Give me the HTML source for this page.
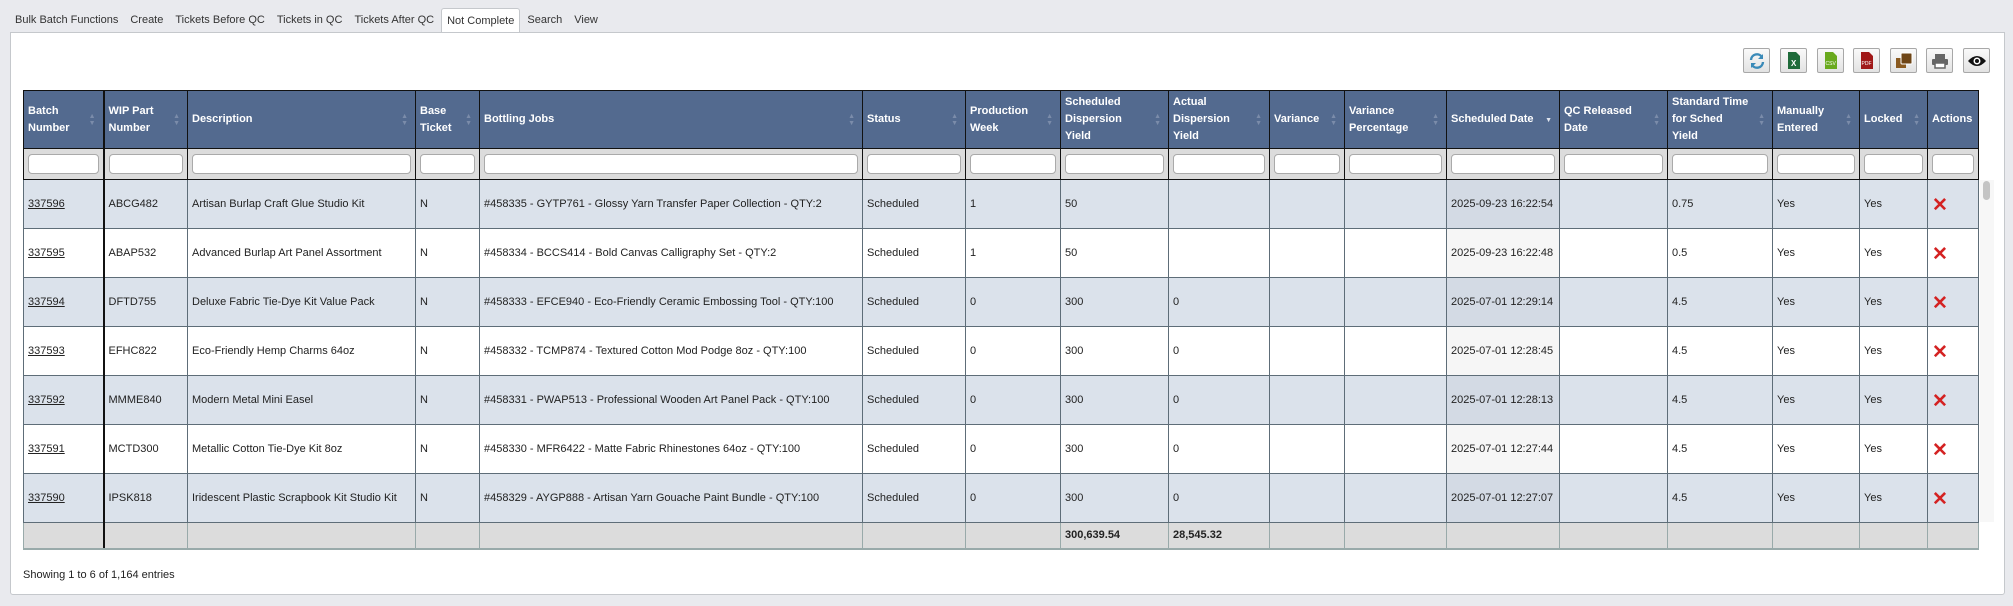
<!DOCTYPE html>
<html><head><meta charset="utf-8"><style>
*{box-sizing:border-box}
body{margin:0;width:2013px;height:606px;background:#e9eaee;font-family:"Liberation Sans",Arial,sans-serif;font-size:11px;color:#222;position:relative;overflow:hidden}
.tabs{position:absolute;left:10px;top:8px;height:25px;display:flex}
.tab{padding:0 5px;height:24px;line-height:24px;color:#333;font-size:11px;margin-right:2px}
.tab.act{background:#fff;border:1px solid #c5c8cc;border-bottom:none;height:25px;border-radius:3px 3px 0 0}
.panel{position:absolute;left:10px;top:32px;width:1995px;height:563px;background:#fff;border:1px solid #c5c8cc;border-radius:0 0 3px 3px}
.btn{position:absolute;top:48px;width:27px;height:25px;border:1px solid #a8a8a8;border-radius:2px;background:linear-gradient(#fafafa,#e2e2e2);display:flex;align-items:center;justify-content:center}
table{position:absolute;left:23px;top:90px;border-collapse:collapse;table-layout:fixed;width:1955px}
th{background:#536a8f;color:#fff;font-weight:bold;text-align:left;padding:0 4px;height:58px;border:1px solid #111;line-height:17px;font-size:11px;position:relative}
th .s{position:absolute;right:7px;top:22px;color:#7b8caa;font-size:7px;line-height:7px}
tr.f td{background:#dcdcdc;height:31px;border:1px solid #111;padding:0 4px}
tr.f input{width:100%;height:20px;border:1px solid #aaa;border-radius:4px;background:#fff}
td{border:1px solid #5e6d78;padding:0 4px;font-size:11px}
tr.d td{height:49px}
tr.d.o td{background:#dbe2eb}
tr.d.o td.sd{background:#d3dae4}
tr.d.e td.sd{background:#f6f6f6}
tr.d.e td{background:#fff}
tr.d td:first-child{border-right:2px solid #111}
th:first-child,tr.f td:first-child{border-right:2px solid #111}
tr.t td{background:#dcdcdc;height:26px;font-weight:bold;border-bottom:2px solid #222;border-color:#9aa}
tr.t td:first-child{border-right:2px solid #111}
a{color:#222;text-decoration:underline}
.x{color:#d42222;font-size:19px;font-weight:bold;line-height:10px;position:relative;top:3px}
</style></head><body>
<div class="tabs">
<div class="tab">Bulk Batch Functions</div><div class="tab">Create</div><div class="tab">Tickets Before QC</div><div class="tab">Tickets in QC</div><div class="tab">Tickets After QC</div><div class="tab act">Not Complete</div><div class="tab">Search</div><div class="tab">View</div>
</div>
<div class="panel"></div>
<div class="btn" style="left:1743px"><svg width="18" height="16" viewBox="0 0 18 16"><path d="M3 7a6 6 0 0 1 11-3M15 9a6 6 0 0 1-11 3" stroke="#3a8ab8" stroke-width="2.4" fill="none"/><path d="M15 1v5h-5z M3 15v-5h5z" fill="#3a8ab8"/></svg></div>
<div class="btn" style="left:1780px"><svg width="12" height="17"><path d="M0 0h8l4 4v13H0z" fill="#1f6b3a"/><text x="3" y="14" font-size="8" fill="#fff" font-family="Liberation Sans" font-weight="bold">X</text></svg></div>
<div class="btn" style="left:1817px"><svg width="12" height="17"><path d="M0 0h8l4 4v13H0z" fill="#6aaa1e"/><text x="0.5" y="13" font-size="5" fill="#fff" font-family="Liberation Sans">CSV</text></svg></div>
<div class="btn" style="left:1853px"><svg width="12" height="17"><path d="M0 0h8l4 4v13H0z" fill="#a01818"/><text x="0.5" y="13" font-size="5" fill="#fff" font-family="Liberation Sans">PDF</text></svg></div>
<div class="btn" style="left:1890px"><svg width="18" height="17"><rect x="1" y="6" width="10" height="10" fill="#8a5a20"/><rect x="6" y="1" width="11" height="11" rx="1" fill="#6e4516" stroke="#fff" stroke-width="1"/></svg></div>
<div class="btn" style="left:1926px"><svg width="18" height="16"><rect x="4" y="1" width="10" height="5" fill="#666"/><rect x="1" y="6" width="16" height="6" rx="1" fill="#666"/><rect x="4" y="10" width="10" height="5" fill="#fff" stroke="#666" stroke-width="1.5"/></svg></div>
<div class="btn" style="left:1963px"><svg width="20" height="14"><path d="M1 7Q10-3 19 7Q10 17 1 7z" fill="#111"/><circle cx="10" cy="7" r="3.5" fill="#fff"/><circle cx="10" cy="7" r="2" fill="#111"/></svg></div>
<table>
<colgroup><col style="width:80px"><col style="width:84px"><col style="width:228px"><col style="width:64px"><col style="width:383px"><col style="width:103px"><col style="width:95px"><col style="width:108px"><col style="width:101px"><col style="width:75px"><col style="width:102px"><col style="width:113px"><col style="width:108px"><col style="width:105px"><col style="width:87px"><col style="width:68px"><col style="width:51px"></colgroup>
<tr><th>Batch<br>Number<span class="s">▲<br>▼</span></th><th>WIP Part<br>Number<span class="s">▲<br>▼</span></th><th>Description<span class="s">▲<br>▼</span></th><th>Base<br>Ticket<span class="s">▲<br>▼</span></th><th>Bottling Jobs<span class="s">▲<br>▼</span></th><th>Status<span class="s">▲<br>▼</span></th><th>Production<br>Week<span class="s">▲<br>▼</span></th><th>Scheduled<br>Dispersion<br>Yield<span class="s">▲<br>▼</span></th><th>Actual<br>Dispersion<br>Yield<span class="s">▲<br>▼</span></th><th>Variance<span class="s">▲<br>▼</span></th><th>Variance<br>Percentage<span class="s">▲<br>▼</span></th><th>Scheduled Date<span class="s" style="color:#dfe4ee;top:26px">▼</span></th><th>QC Released<br>Date<span class="s">▲<br>▼</span></th><th>Standard Time<br>for Sched<br>Yield<span class="s">▲<br>▼</span></th><th>Manually<br>Entered<span class="s">▲<br>▼</span></th><th>Locked<span class="s">▲<br>▼</span></th><th>Actions</th></tr>
<tr class="f"><td><input></td><td><input></td><td><input></td><td><input></td><td><input></td><td><input></td><td><input></td><td><input></td><td><input></td><td><input></td><td><input></td><td><input></td><td><input></td><td><input></td><td><input></td><td><input></td><td><input></td></tr>
<tr class="d o"><td><a>337596</a></td><td>ABCG482</td><td>Artisan Burlap Craft Glue Studio Kit</td><td>N</td><td>#458335 - GYTP761 - Glossy Yarn Transfer Paper Collection - QTY:2</td><td>Scheduled</td><td>1</td><td>50</td><td></td><td></td><td></td><td class="sd">2025-09-23 16:22:54</td><td></td><td>0.75</td><td>Yes</td><td>Yes</td><td><span class="x">✕</span></td></tr>
<tr class="d e"><td><a>337595</a></td><td>ABAP532</td><td>Advanced Burlap Art Panel Assortment</td><td>N</td><td>#458334 - BCCS414 - Bold Canvas Calligraphy Set - QTY:2</td><td>Scheduled</td><td>1</td><td>50</td><td></td><td></td><td></td><td class="sd">2025-09-23 16:22:48</td><td></td><td>0.5</td><td>Yes</td><td>Yes</td><td><span class="x">✕</span></td></tr>
<tr class="d o"><td><a>337594</a></td><td>DFTD755</td><td>Deluxe Fabric Tie-Dye Kit Value Pack</td><td>N</td><td>#458333 - EFCE940 - Eco-Friendly Ceramic Embossing Tool - QTY:100</td><td>Scheduled</td><td>0</td><td>300</td><td>0</td><td></td><td></td><td class="sd">2025-07-01 12:29:14</td><td></td><td>4.5</td><td>Yes</td><td>Yes</td><td><span class="x">✕</span></td></tr>
<tr class="d e"><td><a>337593</a></td><td>EFHC822</td><td>Eco-Friendly Hemp Charms 64oz</td><td>N</td><td>#458332 - TCMP874 - Textured Cotton Mod Podge 8oz - QTY:100</td><td>Scheduled</td><td>0</td><td>300</td><td>0</td><td></td><td></td><td class="sd">2025-07-01 12:28:45</td><td></td><td>4.5</td><td>Yes</td><td>Yes</td><td><span class="x">✕</span></td></tr>
<tr class="d o"><td><a>337592</a></td><td>MMME840</td><td>Modern Metal Mini Easel</td><td>N</td><td>#458331 - PWAP513 - Professional Wooden Art Panel Pack - QTY:100</td><td>Scheduled</td><td>0</td><td>300</td><td>0</td><td></td><td></td><td class="sd">2025-07-01 12:28:13</td><td></td><td>4.5</td><td>Yes</td><td>Yes</td><td><span class="x">✕</span></td></tr>
<tr class="d e"><td><a>337591</a></td><td>MCTD300</td><td>Metallic Cotton Tie-Dye Kit 8oz</td><td>N</td><td>#458330 - MFR6422 - Matte Fabric Rhinestones 64oz - QTY:100</td><td>Scheduled</td><td>0</td><td>300</td><td>0</td><td></td><td></td><td class="sd">2025-07-01 12:27:44</td><td></td><td>4.5</td><td>Yes</td><td>Yes</td><td><span class="x">✕</span></td></tr>
<tr class="d o"><td style="height:44px"><a>337590</a></td><td>IPSK818</td><td>Iridescent Plastic Scrapbook Kit Studio Kit</td><td>N</td><td>#458329 - AYGP888 - Artisan Yarn Gouache Paint Bundle - QTY:100</td><td>Scheduled</td><td>0</td><td>300</td><td>0</td><td></td><td></td><td class="sd">2025-07-01 12:27:07</td><td></td><td>4.5</td><td>Yes</td><td>Yes</td><td><span class="x">✕</span></td></tr>
<tr class="t"><td></td><td></td><td></td><td></td><td></td><td></td><td></td><td>300,639.54</td><td>28,545.32</td><td></td><td></td><td></td><td></td><td></td><td></td><td></td><td></td></tr>
</table>
<div style="position:absolute;left:1980px;top:180px;width:14px;height:342px;background:#f7f7f7"></div>
<div style="position:absolute;left:1983px;top:181px;width:7px;height:19px;background:#c4c4c4;border-radius:4px"></div>
<div style="position:absolute;left:23px;top:569px;font-size:11px">Showing 1 to 6 of 1,164 entries</div>
</body></html>
